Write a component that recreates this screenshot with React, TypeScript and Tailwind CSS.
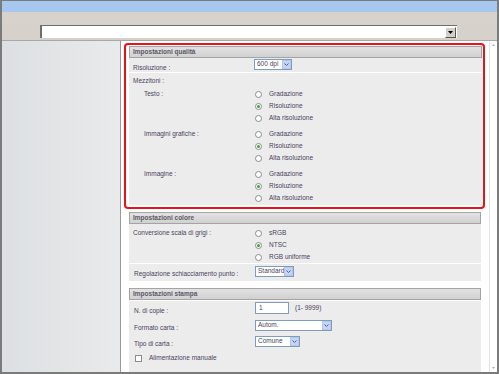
import React from "react"

const labelCls = "text-[6.5px] leading-none text-[#4b3f5c] whitespace-nowrap"

function Radio({ checked }: { checked?: boolean }) {
  return (
    <span className="ml-[1px] w-[7px] h-[7px] rounded-full border border-[#8c8c8c] bg-white flex items-center justify-center">
      {checked && <span className="w-[3px] h-[3px] rounded-full bg-[#35a535]" />}
    </span>
  )
}

function RadioGroup({ options, selected }: { options: string[]; selected: number }) {
  return (
    <div className="flex flex-col">
      {options.map((o, i) => (
        <div key={o} className="h-[12px] flex items-center gap-[7px]">
          <Radio checked={i === selected} />
          <span className={labelCls}>{o}</span>
        </div>
      ))}
    </div>
  )
}

function Select({ value, width }: { value: string; width: string }) {
  return (
    <div className={`h-[11px] ${width} border border-[#7f9db9] bg-white flex items-center`}>
      <span className={`${labelCls} flex-1 pl-[2px]`}>{value}</span>
      <span className="w-[9px] h-[9px] bg-[#c3d4f8] border border-[#b3c6ee] flex items-center justify-center">
        <svg width="5" height="3" viewBox="0 0 5 3">
          <path d="M0.5 0.5 L2.5 2.5 L4.5 0.5" stroke="#4d6185" strokeWidth="1" fill="none" />
        </svg>
      </span>
    </div>
  )
}

function Header({ title }: { title: string }) {
  return (
    <div className="h-[12px] border border-[#a4a4a4] bg-gradient-to-b from-[#e2e2e2] to-[#d1d1d1] flex items-center pl-[3px]">
      <span className="text-[6.5px] leading-none font-bold text-[#5e5868] whitespace-nowrap">{title}</span>
    </div>
  )
}

function Row({ label, indent, children, className }: { label: string; indent?: boolean; children?: React.ReactNode; className?: string }) {
  return (
    <div className={`flex ${className ?? ""}`}>
      <div className={`w-[125px] shrink-0 h-[12px] flex items-center ${indent ? "pl-[15px]" : "pl-[4px]"}`}>
        <span className={labelCls}>{label}</span>
      </div>
      <div>{children}</div>
    </div>
  )
}

const halftone = ["Gradazione", "Risoluzione", "Alta risoluzione"]

export default function App() {
  return (
    <div className="w-[499px] h-[374px] overflow-hidden bg-[#d6d2cb] border-t border-x-2 border-b-2 border-[#7b7b7b] flex flex-col font-['Liberation_Sans',Arial,sans-serif]">
      <div className="h-[11px] bg-[#a6c8ee] shrink-0" />
      <div className="h-[12px] bg-[#d7d3cc] shrink-0" />
      <div className="h-[15px] shrink-0 flex items-center pl-[38px]">
        <div className="w-[417px] h-[13px] bg-white border-l-2 border-t border-[#6f6f6f] flex items-center justify-end pr-[1px]">
          <span className="w-[11px] h-[11px] bg-[#d4d0c8] border border-t-white border-l-white border-r-[#555] border-b-[#555] flex items-center justify-center">
            <svg width="5" height="3" viewBox="0 0 5 3">
              <path d="M0 0 H5 L2.5 3 Z" fill="#000" />
            </svg>
          </span>
        </div>
      </div>
      <div className="h-[2px] shrink-0 border-b border-[#a8a8a8]" />
      <div className="flex-1 flex min-h-0">
        <div className="w-[119px] shrink-0 bg-gradient-to-r from-[#dde0e2] to-[#e8eaeb] border-r border-[#9a9a9a]" />
        <div className="flex-1 bg-white flex min-w-0">
          <div className="flex-1 flex flex-col min-w-0">
            {/* quality section, highlighted */}
            <div className="mt-[2px] ml-[3px] w-[361px] border-2 border-[#e8121b] rounded-[4px] pt-[1px] pb-[2px] pl-[3px] pr-[1px]">
              <Header title="Impostazioni qualità" />
              <div className="bg-[#ececec]">
                <div className="h-[15px] flex items-center border-b border-white pb-[1px]">
                  <div className="w-[125px] pl-[4px]">
                    <span className={labelCls}>Risoluzione :</span>
                  </div>
                  <Select value="600 dpi" width="w-[38px]" />
                </div>
                <div className="pt-[3px] h-[14px] flex items-center pl-[4px]">
                  <span className={labelCls}>Mezzitoni :</span>
                </div>
                <Row label="Testo :" indent className="mt-[1px]">
                  <RadioGroup options={halftone} selected={1} />
                </Row>
                <Row label="Immagini grafiche :" indent className="mt-[4px]">
                  <RadioGroup options={halftone} selected={1} />
                </Row>
                <Row label="Immagine :" indent className="mt-[4px] pb-[1px]">
                  <RadioGroup options={halftone} selected={1} />
                </Row>
              </div>
            </div>

            {/* colour section */}
            <div className="mt-[3px] ml-[8px] w-[352px]">
              <Header title="Impostazioni colore" />
              <div className="bg-[#ececec] pb-[3px]">
                <Row label="Conversione scala di grigi :" className="pt-[3px] border-b border-white">
                  <RadioGroup options={["sRGB", "NTSC", "RGB uniforme"]} selected={1} />
                </Row>
                <div className="h-[14px] flex items-center">
                  <div className="w-[126px] pl-[5px]">
                    <span className={labelCls}>Regolazione schiacciamento punto :</span>
                  </div>
                  <Select value="Standard" width="w-[39px]" />
                </div>
              </div>
            </div>

            {/* print section */}
            <div className="mt-[7px] ml-[8px] w-[352px]">
              <Header title="Impostazioni stampa" />
              <div className="bg-[#ececec] pb-[10px]">
                <div className="h-[14px] mt-[1px] flex items-center">
                  <div className="w-[126px] pl-[5px]">
                    <span className={labelCls}>N. di copie :</span>
                  </div>
                  <div className="w-[34px] h-[12px] border border-[#7f9db9] bg-white flex items-center pl-[3px]">
                    <span className={labelCls}>1</span>
                  </div>
                  <span className={`${labelCls} ml-[6px]`}>(1- 9999)</span>
                </div>
                <div className="h-[12px] mt-[4px] flex items-center">
                  <div className="w-[126px] pl-[5px]">
                    <span className={labelCls}>Formato carta :</span>
                  </div>
                  <Select value="Autom." width="w-[77px]" />
                </div>
                <div className="h-[12px] mt-[4px] flex items-center">
                  <div className="w-[126px] pl-[5px]">
                    <span className={labelCls}>Tipo di carta :</span>
                  </div>
                  <Select value="Comune" width="w-[45px]" />
                </div>
                <div className="h-[12px] mt-[5px] flex items-center pl-[6px] gap-[7px]">
                  <span className="w-[7px] h-[7px] border border-[#8c8c8c] bg-white" />
                  <span className={labelCls}>Alimentazione manuale</span>
                </div>
              </div>
            </div>
          </div>
          {/* scrollbar */}
          <div className="w-[8px] shrink-0 border-l border-[#e4e4e4] flex flex-col justify-between items-center py-[3px]">
            <svg width="3" height="2" viewBox="0 0 3 2">
              <path d="M0 2 L1.5 0 L3 2 Z" fill="#b0b0b0" />
            </svg>
            <svg width="3" height="2" viewBox="0 0 3 2">
              <path d="M0 0 L1.5 2 L3 0 Z" fill="#b0b0b0" />
            </svg>
          </div>
        </div>
      </div>
    </div>
  )
}
